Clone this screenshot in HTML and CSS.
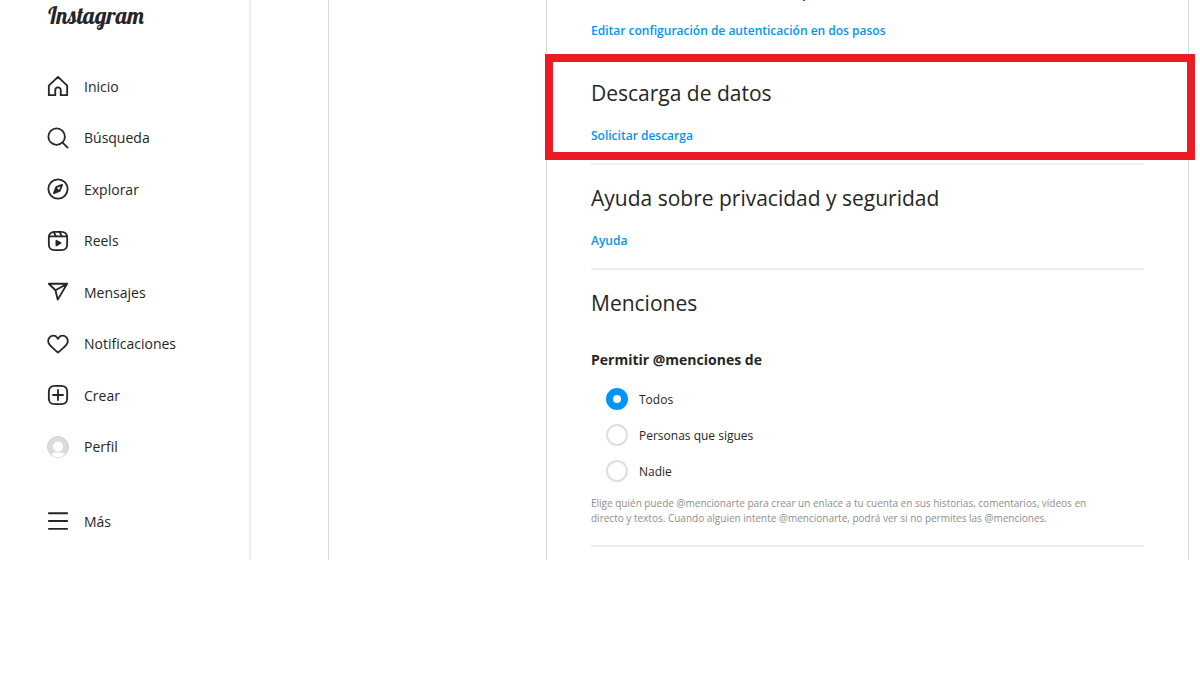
FILE: index.html
```html
<!DOCTYPE html>
<html lang="es">
<head>
<meta charset="utf-8">
<meta name="viewport" content="width=device-width, initial-scale=1">
<title>Privacidad y seguridad • Instagram</title>
<link rel="stylesheet" href="styles.css">
</head>
<body>
<div class="page">
  <aside class="sidebar">
    <a class="logo" href="#">Instagram</a>
    <nav class="nav" aria-label="Principal">
      <a class="nav-item" href="#">
        <svg class="icon" viewBox="0 0 24 24" aria-hidden="true"><path d="M9.005 16.545a2.997 2.997 0 0 1 2.997-2.997A2.997 2.997 0 0 1 15 16.545V22h7V11.543L12 2 2 11.543V22h7.005Z"/></svg>
        <span>Inicio</span>
      </a>
      <a class="nav-item" href="#">
        <svg class="icon" viewBox="0 0 24 24" aria-hidden="true"><circle cx="10.5" cy="10.5" r="9"/><path d="M17 17 22.500 22.500"/></svg>
        <span>Búsqueda</span>
      </a>
      <a class="nav-item" href="#">
        <svg class="icon" viewBox="0 0 24 24" aria-hidden="true"><path d="M13.941 13.953 7.581 16.424 10.06 10.056 16.42 7.585Z"/><path class="solid" d="M10.06 10.056 13.949 13.945 7.581 16.424Z"/><circle cx="12" cy="12" r="10.5"/></svg>
        <span>Explorar</span>
      </a>
      <a class="nav-item" href="#">
        <svg class="icon" viewBox="0 0 24 24" aria-hidden="true"><path d="M2.049 7.002H21.95M13.504 2.001 16.362 7.002M7.207 2.11 10.002 7.002"/><path d="M2 12.001v3.449c0 2.849.698 4.006 1.606 4.945.94.908 2.098 1.607 4.946 1.607h6.896c2.848 0 4.006-.699 4.946-1.607.908-.939 1.606-2.096 1.606-4.945V8.552c0-2.848-.698-4.006-1.606-4.945C19.454 2.699 18.296 2 15.448 2H8.552c-2.848 0-4.006.699-4.946 1.607C2.698 4.546 2 5.704 2 8.552Z"/><path class="solid" d="M9.763 17.664a.908.908 0 0 1-.454-.787V11.63a.909.909 0 0 1 1.364-.788l4.545 2.624a.909.909 0 0 1 0 1.575l-4.545 2.624a.91.91 0 0 1-.91 0Z"/></svg>
        <span>Reels</span>
      </a>
      <a class="nav-item" href="#">
        <svg class="icon" viewBox="0 0 24 24" aria-hidden="true"><path d="M22 3 9.218 10.083M11.698 20.334 22 3.001H2L9.218 10.084Z"/></svg>
        <span>Mensajes</span>
      </a>
      <a class="nav-item" href="#">
        <svg class="icon" viewBox="0 0 24 24" aria-hidden="true"><path d="M16.792 2.904A5.7 5.7 0 0 1 22.7 9.122c0 3.372-2.852 5.459-5.797 7.922-2.512 2.243-4.465 3.869-4.903 4.252-.477-.409-2.743-2.323-4.903-4.252C4.141 14.572 1.3 12.467 1.3 9.122a5.7 5.7 0 0 1 5.908-6.218 4.6 4.6 0 0 1 3.875 2.141c.6.875.78 1.363.92 1.363s.278-.488.91-1.366a4.6 4.6 0 0 1 3.879-2.138Z"/></svg>
        <span>Notificaciones</span>
      </a>
      <a class="nav-item" href="#">
        <svg class="icon" viewBox="0 0 24 24" aria-hidden="true"><path d="M2 12v3.45c0 2.849.698 4.005 1.606 4.944.94.909 2.098 1.608 4.946 1.608h6.896c2.848 0 4.006-.7 4.946-1.608C21.302 19.455 22 18.3 22 15.45V8.552c0-2.849-.698-4.006-1.606-4.945C19.454 2.7 18.296 2 15.448 2H8.552c-2.848 0-4.006.699-4.946 1.607C2.698 4.547 2 5.703 2 8.552ZM6.545 12.001H17.455M12.003 6.545V17.455"/></svg>
        <span>Crear</span>
      </a>
      <a class="nav-item" href="#">
        <svg class="icon avatar" viewBox="0 0 24 24" aria-hidden="true"><circle class="avatar-bg" cx="12" cy="12" r="11.5"/><path class="avatar-fg" d="M4.500 20.200c1.300-1.700 3.500-2.200 5.500-2.200h4c2 0 4.200.5 5.500 2.200a11 11 0 0 1-15 0Z"/><circle class="avatar-fg" cx="12" cy="11.200" r="5.600"/></svg>
        <span>Perfil</span>
      </a>
    </nav>
    <button class="nav-item more" type="button">
      <svg class="icon" viewBox="0 0 24 24" aria-hidden="true"><path d="M2 3.500H22M2 12H22M2 20.500H22"/></svg>
      <span>Más</span>
    </button>
  </aside>

  <main class="main">
    <div class="settings">
      <section class="section">
        <h2>Autenticación en dos pasos</h2>
        <a class="link" href="#">Editar configuración de autenticación en dos pasos</a>
      </section>
      <section class="section highlighted">
        <h2>Descarga de datos</h2>
        <a class="link" href="#">Solicitar descarga</a>
      </section>
      <section class="section">
        <h2>Ayuda sobre privacidad y seguridad</h2>
        <a class="link" href="#">Ayuda</a>
      </section>
      <section class="section">
        <h2>Menciones</h2>
        <fieldset class="options">
          <legend>Permitir @menciones de</legend>
          <label class="option"><input type="radio" name="mentions" checked><span>Todos</span></label>
          <label class="option"><input type="radio" name="mentions"><span>Personas que sigues</span></label>
          <label class="option"><input type="radio" name="mentions"><span>Nadie</span></label>
        </fieldset>
        <p class="help">Elige quién puede @mencionarte para crear un enlace a tu cuenta en sus historias, comentarios, vídeos en directo y textos. Cuando alguien intente @mencionarte, podrá ver si no permites las @menciones.</p>
      </section>
    </div>
  </main>
</div>
</body>
</html>
```
FILE: styles.css
```css
* {
  box-sizing: border-box;
}

body {
  margin: 0;
  background: #fff;
  color: #262626;
  font-family: "Segoe UI", "Open Sans", "Noto Sans", sans-serif;
  font-size: 14px;
}

a {
  text-decoration: none;
}

.page {
  display: flex;
  padding-right: 11px;
  overflow: hidden;
}

.sidebar {
  display: flex;
  flex: none;
  flex-direction: column;
  width: 251px;
  padding: 0 20px 27px 47px;
  border-right: 2px solid #efefef;
}

.logo {
  margin-bottom: 42px;
  color: #262626;
  font-family: "Lobster Two", "Liberation Serif", serif;
  font-size: 23px;
  font-style: italic;
  font-weight: 700;
  line-height: 32px;
}

.nav {
  display: flex;
  flex: 1;
  flex-direction: column;
  justify-content: space-between;
}

.nav-item {
  display: flex;
  align-items: center;
  gap: 15px;
  height: 24px;
  color: #262626;
  font-size: 14px;
}

.more {
  margin-top: 50px;
  padding: 0;
  border: 0;
  background: none;
  font-family: inherit;
}

.icon {
  flex: none;
  width: 22px;
  height: 22px;
  fill: none;
  stroke: #262626;
  stroke-width: 2;
  stroke-linecap: round;
  stroke-linejoin: round;
}

.icon .solid {
  fill: #262626;
  stroke: none;
}

.icon .avatar-bg {
  fill: #dbdbdb;
  stroke: #cfcfcf;
  stroke-width: 1;
}

.icon .avatar-fg {
  fill: #fff;
  stroke: none;
}

.main {
  flex: 1;
  margin-left: 77px;
  padding-left: 217px;
  border-left: 1px solid #dbdbdb;
}

.settings {
  margin-top: -45px;
  padding: 0 44px 13px;
  border: solid #dbdbdb;
  border-width: 0 1px;
}

.section {
  position: relative;
  padding: 19px 0;
  border-bottom: 2px solid #efefef;
}

.highlighted::after {
  position: absolute;
  inset: -6px -51px 3px -46px;
  border: 8px solid #ed1c24;
  content: "";
  pointer-events: none;
}

h2 {
  margin: 0 0 20px;
  font-size: 21px;
  font-weight: 400;
  line-height: 28px;
}

.link {
  display: block;
  margin-bottom: -1px;
  color: #0095f6;
  font-size: 12px;
  font-weight: 600;
  line-height: 18px;
}

.options {
  margin: 33px 0 7px;
  padding: 0;
  border: 0;
}

.options legend {
  margin-bottom: 11px;
  padding: 0;
  font-size: 14px;
  font-weight: 700;
  line-height: 20px;
}

.option {
  display: flex;
  align-items: center;
  gap: 11px;
  height: 36px;
  padding-left: 15px;
  font-size: 12px;
}

.option input {
  width: 22px;
  height: 22px;
  margin: 0;
  appearance: none;
  border: 2px solid #dfdfdf;
  border-radius: 50%;
  background: #fff;
}

.option input:checked {
  border: 7px solid #0095f6;
}

.help {
  margin: 0;
  padding-right: 30px;
  color: #8e8e8e;
  font-size: 10px;
  line-height: 15px;
}
```
